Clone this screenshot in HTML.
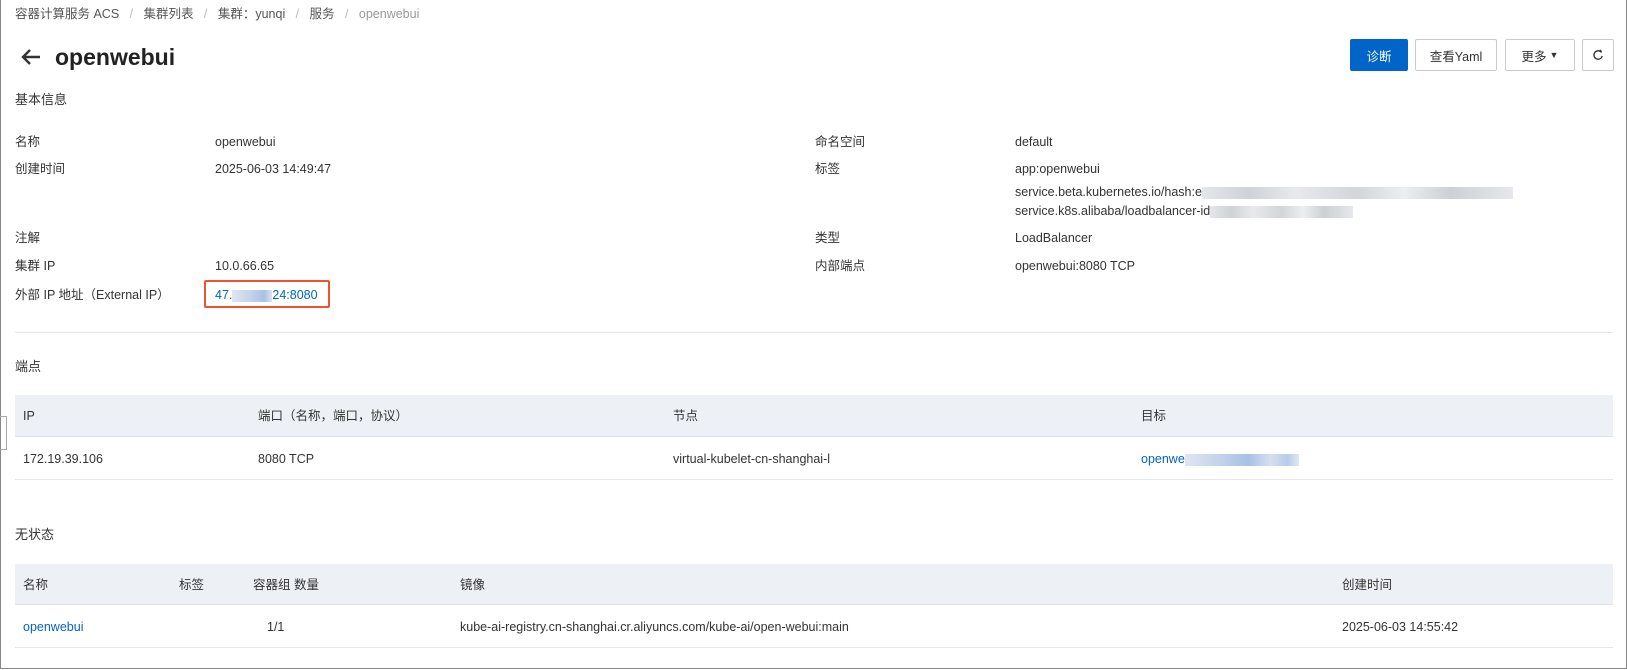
<!DOCTYPE html>
<html><head><meta charset="utf-8"><style>
*{box-sizing:border-box;margin:0;padding:0}
body{width:1627px;height:670px;position:relative;background:#fff;font-family:"Liberation Sans","Noto Sans CJK SC",sans-serif;font-size:12.5px;color:#333;overflow:hidden}
.a{position:absolute;white-space:nowrap;line-height:16px}
.frame{position:absolute;left:0;top:-2px;width:1627px;height:671px;border:1px solid #888;border-top:none}
.bc{color:#555}.sep{color:#bbb}
.btn{position:absolute;top:39px;height:32px;border:1px solid #c8ccd2;border-radius:2px;background:#fff;font-size:12.5px;display:flex;align-items:center;justify-content:center;color:#333}
.th{position:absolute;left:15px;width:1598px;background:#edf0f5;border-bottom:1px solid #dde1e7}
.tr{position:absolute;left:15px;width:1598px;border-bottom:1px solid #e3e6ea}
.link{color:#0064c8}
.blur{display:inline-block;height:12px;vertical-align:middle;background:linear-gradient(90deg,#e4e6ea,#cfd2d6 15%,#e8e9ec 30%,#d3d5d9 50%,#eceef0 65%,#cdd0d4 80%,#e6e8eb)}
</style></head><body>
<div class="frame"></div>
<div class="a bc" style="left:15px;top:6px">容器计算服务 ACS <span class="sep">&nbsp;&nbsp;/&nbsp;&nbsp;</span> 集群列表 <span class="sep">&nbsp;&nbsp;/&nbsp;&nbsp;</span> 集群：yunqi <span class="sep">&nbsp;&nbsp;/&nbsp;&nbsp;</span> 服务 <span class="sep">&nbsp;&nbsp;/&nbsp;&nbsp;</span> <span style="color:#999">openwebui</span></div>
<svg style="position:absolute;left:20px;top:47px" width="22" height="20" viewBox="0 0 22 20"><path d="M20 10H3M10 3L3 10L10 17" stroke="#333" stroke-width="2.4" fill="none"/></svg>
<div class="a" style="left:55px;top:42px;font-size:23px;line-height:30px;font-weight:bold;color:#222">openwebui</div>
<div class="btn" style="left:1350px;width:58px;background:#0064c8;border-color:#0064c8;color:#fff">诊断</div>
<div class="btn" style="left:1415px;width:82px">查看Yaml</div>
<div class="btn" style="left:1505px;width:70px">更多 <span style="font-size:9px;margin-left:3px">▼</span></div>
<div class="btn" style="left:1582px;width:32px"><svg width="12" height="12" viewBox="0 0 12 12"><path d="M9.5 3.5A4.2 4.2 0 1 0 10.2 7" stroke="#333" stroke-width="1.3" fill="none"/><path d="M7 1.5L10 3.3L9 0.5z" fill="#333"/></svg></div>
<div class="a" style="left:15px;top:92px;font-size:13px">基本信息</div>

<div class="a" style="left:15px;top:134px">名称</div><div class="a" style="left:215px;top:134px">openwebui</div>
<div class="a" style="left:15px;top:161px">创建时间</div><div class="a" style="left:215px;top:161px">2025-06-03 14:49:47</div>
<div class="a" style="left:15px;top:230px">注解</div>
<div class="a" style="left:15px;top:258px">集群 IP</div><div class="a" style="left:215px;top:258px">10.0.66.65</div>
<div class="a" style="left:15px;top:287px">外部 IP 地址（External IP）</div>
<div class="a link" style="left:215px;top:287px">47.<span class="blur" style="width:40px;background:linear-gradient(90deg,#dfe6f2,#c8d6ec 40%,#a9c2e4 80%,#dbe4f0)"></span>24:8080</div>
<div style="position:absolute;left:204px;top:280px;width:126px;height:28px;border:2px solid #f0542e;border-radius:2px"></div>

<div class="a" style="left:815px;top:134px">命名空间</div><div class="a" style="left:1015px;top:134px">default</div>
<div class="a" style="left:815px;top:161px">标签</div>
<div class="a" style="left:1015px;top:161px">app:openwebui</div>
<div class="a" style="left:1015px;top:184px">service.beta.kubernetes.io/hash:e<span class="blur" style="width:311px"></span></div>
<div class="a" style="left:1015px;top:203px">service.k8s.alibaba/loadbalancer-id<span class="blur" style="width:143px"></span></div>
<div class="a" style="left:815px;top:230px">类型</div><div class="a" style="left:1015px;top:230px">LoadBalancer</div>
<div class="a" style="left:815px;top:258px">内部端点</div><div class="a" style="left:1015px;top:258px">openwebui:8080 TCP</div>

<div style="position:absolute;left:15px;top:332px;width:1598px;height:1px;background:#e3e6ea"></div>
<div class="a" style="left:15px;top:359px;font-size:13px">端点</div>
<div style="position:absolute;left:0;top:416px;width:7px;height:34px;border:1px solid #aaa;border-left:none"></div>
<div class="th" style="top:395px;height:42px"></div>
<div class="a" style="left:23px;top:408px">IP</div>
<div class="a" style="left:258px;top:408px">端口（名称，端口，协议）</div>
<div class="a" style="left:673px;top:408px">节点</div>
<div class="a" style="left:1141px;top:408px">目标</div>
<div class="tr" style="top:437px;height:43px"></div>
<div class="a" style="left:23px;top:451px">172.19.39.106</div>
<div class="a" style="left:258px;top:451px">8080 TCP</div>
<div class="a" style="left:673px;top:451px">virtual-kubelet-cn-shanghai-l</div>
<div class="a link" style="left:1141px;top:451px">openwe<span class="blur" style="width:114px;background:linear-gradient(90deg,#dfe6f2,#c3d3ec 30%,#a7c0e4 55%,#d6def0 75%,#b9cce9 90%,#e2e8f2)"></span></div>

<div class="a" style="left:15px;top:527px;font-size:13px">无状态</div>
<div class="th" style="top:564px;height:41px"></div>
<div class="a" style="left:23px;top:577px">名称</div>
<div class="a" style="left:179px;top:577px">标签</div>
<div class="a" style="left:253px;top:577px">容器组 数量</div>
<div class="a" style="left:460px;top:577px">镜像</div>
<div class="a" style="left:1342px;top:577px">创建时间</div>
<div class="tr" style="top:605px;height:43px"></div>
<div class="a link" style="left:23px;top:619px">openwebui</div>
<div class="a" style="left:267px;top:619px">1/1</div>
<div class="a" style="left:460px;top:619px">kube-ai-registry.cn-shanghai.cr.aliyuncs.com/kube-ai/open-webui:main</div>
<div class="a" style="left:1342px;top:619px">2025-06-03 14:55:42</div>
</body></html>
